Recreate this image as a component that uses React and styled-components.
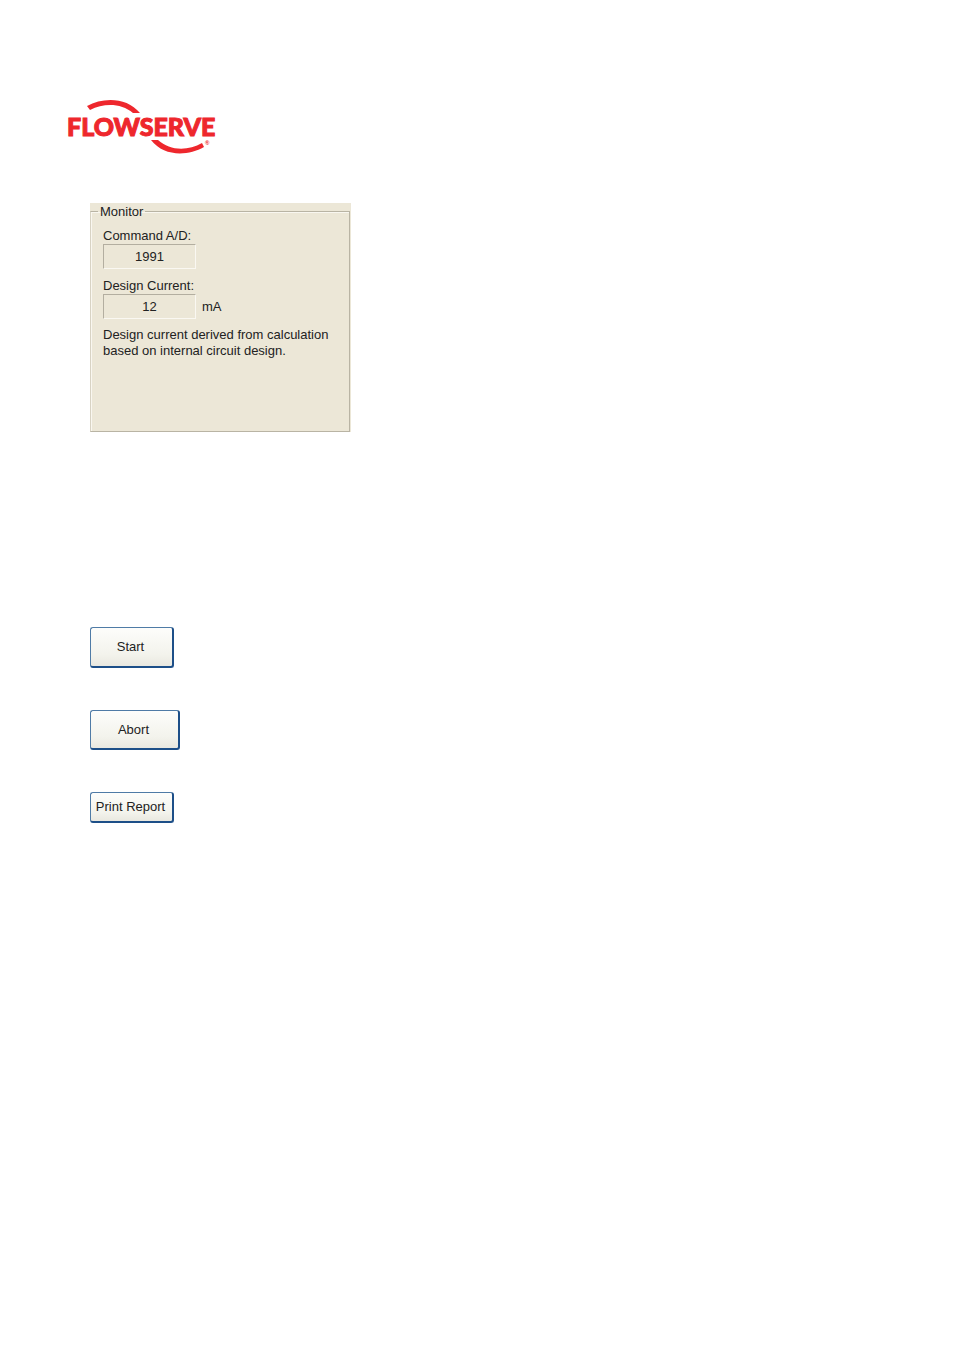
import React from 'react';
import styled, { createGlobalStyle } from 'styled-components';

function Logo(){
    return(
        <LogoLink href="#" aria-label="Flowserve">
            <svg width="150" height="58" viewBox="67 98 150 58">
                <g fill="#ee272d">
                    <path d="M87 106 C103 97 127 97 140 113 L133 113 C121 103 104 103 90 110 Z" />
                    <path d="M151 140 L158 140 C170 151 188 151 202 143 L204 147 C188 156 164 157 151 140 Z" />
                    <LogoText x="67" y="136">FLOWSERVE</LogoText>
                    <LogoMark x="205" y="145">®</LogoMark>
                </g>
            </svg>
        </LogoLink>
    )
}

function App(){
    return(
        <Page>
            <GlobalStyle />
            <Logo />
            <Panel>
                <Group>
                    <Legend>Monitor</Legend>
                    <Field>
                        <label htmlFor="command">Command A/D:</label>
                        <Value id="command" defaultValue="1991" readOnly />
                    </Field>
                    <Field>
                        <label htmlFor="current">Design Current:</label>
                        <Row>
                            <Value id="current" defaultValue="12" readOnly />
                            <Unit>mA</Unit>
                        </Row>
                    </Field>
                    <Note>
                        Design current derived from calculation
                        based on internal circuit design.
                    </Note>
                </Group>
            </Panel>
            <Actions>
                <Button $width={84} $height={41}>Start</Button>
                <Button $width={90} $height={40}>Abort</Button>
                <Button $width={84} $height={31}>Print Report</Button>
            </Actions>
        </Page>
    )
}

const GlobalStyle = createGlobalStyle`
    *{
        box-sizing: border-box;
    }
    body{
        margin: 0;
        background: white;
        font-family: 'Liberation Sans', Arial, sans-serif;
        font-size: 13px;
        line-height: 16px;
        color: #222;
    }
`;

const Page = styled.main`
    display: flex;
    flex-direction: column;
    align-items: flex-start;
    padding: 98px 90px 40px;
`;

const LogoLink = styled.a`
    display: block;
    margin-left: -23px;
    svg{
        display: block;
    }
`;

const LogoText = styled.text`
    font-family: Lato, 'Liberation Sans', sans-serif;
    font-size: 25px;
    font-weight: 900;
    stroke: #ee272d;
    stroke-width: 1px;
`;

const LogoMark = styled.text`
    font-family: 'Liberation Sans', sans-serif;
    font-size: 6px;
    font-weight: bold;
`;

const Panel = styled.section`
    width: 100%;
    max-width: 261px;
    margin-top: 47px;
    padding-right: 1px;
    background: #ece7d7;
`;

const Group = styled.fieldset`
    min-height: 229px;
    margin: 0;
    padding: 8px 12px;
    border: 1px solid #b9b4a4;
    border-left-color: #d8d3c4;
    box-shadow: inset 1px 1px #f9f7f0;
`;

const Legend = styled.legend`
    margin-left: -5px;
    padding: 1px 2px 0;
`;

const Field = styled.div`
    & + &{
        margin-top: 9px;
    }
    label{
        display: block;
    }
`;

const Row = styled.div`
    display: flex;
    align-items: center;
    gap: 6px;
`;

const Value = styled.input`
    display: block;
    width: 93px;
    height: 25px;
    padding: 0;
    border: 1px solid;
    border-color: #b3aea0 #faf8f2 #faf8f2 #b3aea0;
    background: #ece7d7;
    font: inherit;
    color: inherit;
    text-align: center;
`;

const Unit = styled.span`
    padding-top: 1px;
`;

const Note = styled.p`
    margin: 8px 0 0;
`;

const Actions = styled.div`
    display: flex;
    flex-direction: column;
    align-items: flex-start;
    gap: 42px;
    margin-top: 195px;
`;

const Button = styled.button`
    width: ${props => props.$width}px;
    height: ${props => props.$height}px;
    padding: 0 2px 0 0;
    border: 1px solid;
    border-color: #4f7ba6 #1d4f88 #1d4f88 #4f7ba6;
    border-right-width: 2px;
    border-bottom-width: 2px;
    border-radius: 3px;
    background: linear-gradient(#fdfdfb, #f3f3ec 70%, #e9e8e0);
    font: inherit;
    color: inherit;
    white-space: nowrap;
`;

export default App;
